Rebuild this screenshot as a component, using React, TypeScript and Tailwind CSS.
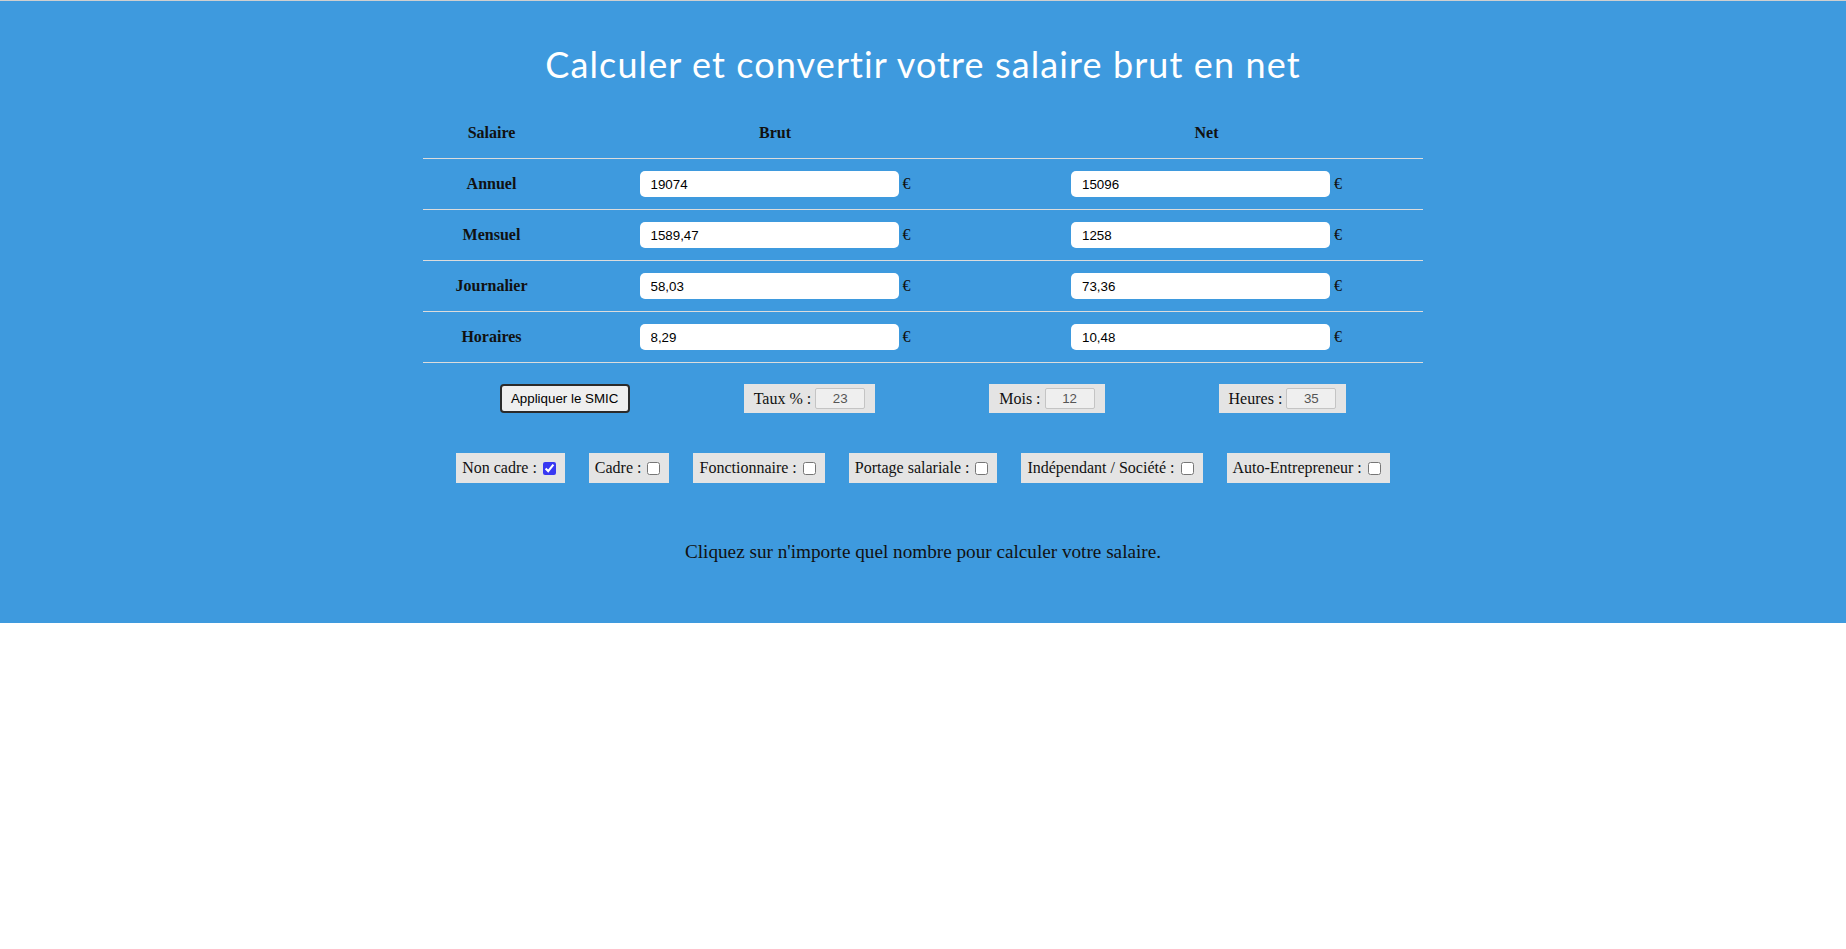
import { useState } from "react";

const rows = [
  { label: "Annuel", brut: "19074", net: "15096" },
  { label: "Mensuel", brut: "1589,47", net: "1258" },
  { label: "Journalier", brut: "58,03", net: "73,36" },
  { label: "Horaires", brut: "8,29", net: "10,48" },
];

const statuts = [
  "Non cadre",
  "Cadre",
  "Fonctionnaire",
  "Portage salariale",
  "Indépendant / Société",
  "Auto-Entrepreneur",
];

function MoneyCell({ value }: { value: string }) {
  return (
    <div className="flex items-center justify-center">
      <input
        type="text"
        defaultValue={value}
        className="h-[26px] w-[259px] rounded-[5px] bg-white pl-[11px] font-['Liberation_Sans',Arial,sans-serif] text-[13.33px] text-black outline-none"
      />
      <span className="ml-[4px]">€</span>
    </div>
  );
}

function SmallField({ label, value }: { label: string; value: string }) {
  return (
    <div className="flex h-[29px] items-center bg-[#e4e4e4] px-[10px] text-[16px] text-[#111]">
      <span>{label} :</span>
      <input
        type="text"
        readOnly
        defaultValue={value}
        className="ml-[4px] h-[21px] w-[50px] rounded-[2px] border border-[#c4c4c4] bg-[#efefef] text-center font-['Liberation_Sans',Arial,sans-serif] text-[13.33px] text-[#555] outline-none"
      />
    </div>
  );
}

export default function App() {
  const [statut, setStatut] = useState("Non cadre");

  return (
    <div className="min-h-screen bg-white font-['Liberation_Serif','Times_New_Roman',serif]">
      <div className="border-t border-[#cfcfcf] bg-[#3e9ade] pb-[60px]">
        <h1 className="pt-[42px] text-center font-['Lato','Open_Sans',sans-serif] text-[36px] leading-[43px] tracking-[1.1px] text-white">
          Calculer et convertir votre salaire brut en net
        </h1>

        <div className="mx-auto mt-[22px] w-[1000px] text-[16px] text-[#111]">
          <div className="grid h-[51px] grid-cols-[137px_430px_433px] items-center border-b border-[#dcdcdc] text-center font-bold">
            <div>Salaire</div>
            <div>Brut</div>
            <div>Net</div>
          </div>
          {rows.map((r) => (
            <div
              key={r.label}
              className="grid h-[51px] grid-cols-[137px_430px_433px] items-center border-b border-[#dcdcdc]"
            >
              <div className="text-center font-bold">{r.label}</div>
              <MoneyCell value={r.brut} />
              <MoneyCell value={r.net} />
            </div>
          ))}
        </div>

        <div className="mt-[21px] flex items-center justify-center gap-[114px]">
          <button className="h-[29px] w-[130px] rounded-[4px] border-2 border-[#2b2b2b] bg-[#efefef] font-['Liberation_Sans',Arial,sans-serif] text-[13.33px] text-black">
            Appliquer le SMIC
          </button>
          <SmallField label="Taux %" value="23" />
          <SmallField label="Mois" value="12" />
          <SmallField label="Heures" value="35" />
        </div>

        <div className="mt-[40px] flex items-center justify-center gap-6">
          {statuts.map((s) => (
            <label
              key={s}
              className="flex h-[30px] items-center bg-[#e4e4e4] pl-[6px] pr-[9px] text-[16px] text-[#111]"
            >
              <span>{s} :</span>
              <input
                type="checkbox"
                checked={statut === s}
                onChange={() => setStatut(s)}
                className="ml-[6px] h-[13px] w-[13px] accent-[#3838f2]"
              />
            </label>
          ))}
        </div>

        <p className="mt-[58px] text-center text-[19.2px] leading-[22px] text-[#111]">
          Cliquez sur n'importe quel nombre pour calculer votre salaire.
        </p>
      </div>
    </div>
  );
}
